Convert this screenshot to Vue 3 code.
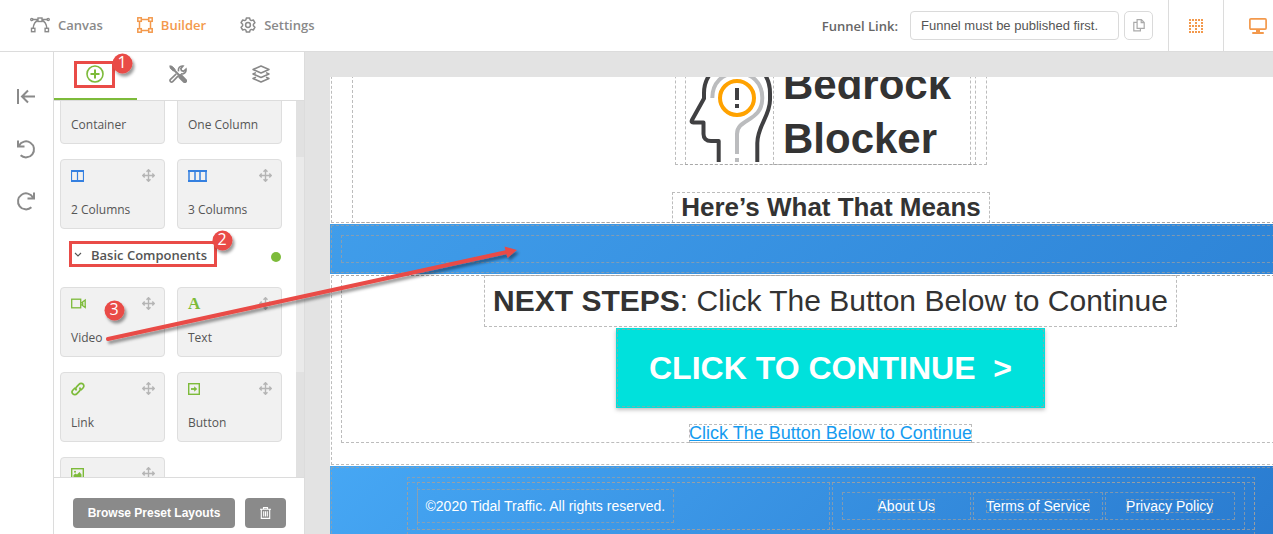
<script setup>
const nav = [
  { id: 'flow', label: 'Canvas' },
  { id: 'builder', label: 'Builder' },
  { id: 'settings', label: 'Settings' },
]
const layoutCards = [
  { id: 'container', label: 'Container' },
  { id: 'one', label: 'One Column' },
  { id: 'two', label: '2 Columns' },
  { id: 'three', label: '3 Columns' },
]
const basicCards = [
  { id: 'video', label: 'Video' },
  { id: 'text', label: 'Text' },
  { id: 'link', label: 'Link' },
  { id: 'button', label: 'Button' },
  { id: 'image', label: '' },
]
const footerLinks = ['About Us', 'Terms of Service', 'Privacy Policy']
</script>

<template>
  <div class="app">
    <header class="topbar">
      <nav class="nav">
        <a v-for="n in nav" :key="n.id" href="#" class="nav-item" :class="{ active: n.id === 'builder' }">
          <svg v-if="n.id === 'flow'" width="20" height="16" viewBox="0 0 20 16" fill="none" stroke="currentColor" stroke-width="1.4">
            <path d="M3 2.5h5M12 2.5h5M8 3.5C5 4.5 3.6 7 3.2 11M12 3.5c3 1 4.4 3.500 4.800 7.500" />
            <rect x="8" y="1" width="4" height="3.500" />
            <rect x="1.500" y="11.300" width="3.400" height="3.400" />
            <rect x="15.100" y="11.300" width="3.400" height="3.400" />
            <circle cx="1.800" cy="2.500" r="1.100" />
            <circle cx="18.200" cy="2.500" r="1.100" />
          </svg>
          <svg v-else-if="n.id === 'builder'" width="16" height="16" viewBox="0 0 16 16" fill="none" stroke="currentColor" stroke-width="1.500">
            <path d="M4.500 2.500h7M4.500 13.500h7M2.500 4.500v7M13.500 4.500v7" />
            <rect x=".8" y=".8" width="3.500" height="3.500" />
            <rect x="11.700" y=".8" width="3.500" height="3.500" />
            <rect x=".8" y="11.700" width="3.500" height="3.500" />
            <rect x="11.700" y="11.700" width="3.500" height="3.500" />
          </svg>
          <svg v-else width="16" height="16" viewBox="0 0 16 16" fill="none" stroke="currentColor" stroke-width="1.500" stroke-linejoin="round">
            <path d="M6.400.9h3.200l.5 2 1.200.7 2-.6 1.600 2.700-1.500 1.500v1.600l1.500 1.500-1.600 2.700-2-.6-1.200.7-.5 2H6.400l-.5-2-1.200-.7-2 .6-1.600-2.700 1.500-1.500V7.200L1.100 5.700 2.700 3l2 .6 1.200-.7z" />
            <circle cx="8" cy="8" r="2.400" />
          </svg>
          <span>{{ n.label }}</span>
        </a>
      </nav>
      <div class="tools">
        <label for="funnel-link" class="funnel-label">Funnel Link:</label>
        <input id="funnel-link" class="funnel-input" type="text" value="Funnel must be published first." readonly />
        <button class="copy" type="button" aria-label="Copy link">
          <svg width="12" height="13" viewBox="0 0 12 13" fill="none" stroke="#aaa" stroke-width="1.200">
            <path d="M4.100.7h4.300l2.800 2.800v5.800H4.100zM8.200.7v3h3" />
            <path d="M4 3.300H.8v8.500h6.600V9.500" />
          </svg>
        </button>
        <button class="cell" type="button" aria-label="Toggle guides">
          <svg width="14" height="14" viewBox="0 0 14 14" stroke="currentColor" stroke-width="2" fill="none">
            <path d="M0 1h14M0 7h14M0 13h14M1 0v14M7 0v14M13 0v14" stroke-dasharray="2 1" />
          </svg>
        </button>
        <button class="cell" type="button" aria-label="Desktop view">
          <svg width="18" height="16" viewBox="0 0 18 16" fill="none" stroke="currentColor" stroke-width="1.700">
            <rect x=".9" y=".9" width="16.200" height="10.200" rx="1" />
            <path d="M9 11v4" stroke-width="4" />
            <path d="M4 15h10" stroke-width="2" stroke-linecap="round" />
          </svg>
        </button>
      </div>
    </header>

    <div class="body">
      <aside class="rail">
        <button type="button" aria-label="Collapse">
          <svg width="20" height="18" viewBox="0 0 20 18" fill="none" stroke="currentColor" stroke-width="2">
            <path d="M2 1v15M19 8.500H6M12 2.500L6 8.500l6 6" />
          </svg>
        </button>
        <button type="button" aria-label="Undo">
          <svg width="20" height="20" viewBox="0 0 20 20" fill="none" stroke="currentColor" stroke-width="2">
            <path d="M3 6.500A8 8 0 1 1 4.600 16.300M2 1.500v6h6.500" />
          </svg>
        </button>
        <button type="button" aria-label="Redo">
          <svg width="20" height="20" viewBox="0 0 20 20" fill="none" stroke="currentColor" stroke-width="2">
            <path d="M17 6.500A8 8 0 1 0 15.400 16.300M18 1.500v6h-6.500" />
          </svg>
        </button>
      </aside>

      <section class="panel">
        <div class="tabs">
          <button class="tab on" type="button" aria-label="Add">
            <svg width="18" height="18" viewBox="0 0 18 18" fill="none" stroke="currentColor">
              <circle cx="9" cy="9" r="8" stroke-width="1.600" />
              <path d="M9 4.500v9M4.500 9h9" stroke-width="2" />
            </svg>
          </button>
          <button class="tab" type="button" aria-label="Tools">
            <svg width="18" height="18" viewBox="0 0 18 18" fill="none" stroke="currentColor">
              <path d="M1.500 1.500L10.500 10.500" stroke-width="2" />
              <path d="M.8.8l2.500.6 2.800 3-1.700 1.700-3-2.800z" fill="currentColor" stroke-width="1" />
              <path d="M11.500 11.500l4.300 4.300" stroke-width="4.600" stroke-linecap="round" />
              <path d="M7.300 8.800L1.500 14.400a1.500 1.500 0 0 0 2.200 2.200l5.500-5.700M9.600 6.400C8.800 3 11 .6 14 1.100l-2.200 2.500.7 2 2 .7 2.500-2.200c.5 3.200-2 5.500-5.200 4.700" stroke-width="1.600" />
            </svg>
          </button>
          <button class="tab" type="button" aria-label="Layers">
            <svg width="18" height="18" viewBox="0 0 18 18" fill="none" stroke="currentColor" stroke-width="1.500" stroke-linejoin="round">
              <path d="M9 1l8 3.500-8 3.500-8-3.500z" />
              <path d="M4 7.600L1 9l8 3.500L17 9l-3-1.400" />
              <path d="M4 12.100L1 13.500 9 17l8-3.500-3-1.400" />
            </svg>
          </button>
        </div>

        <div class="scroll">
          <div class="list">
            <div class="grid">
              <div v-for="c in layoutCards" :key="c.id" class="card">
                <div class="card-top blue">
                  <svg v-if="c.id === 'three'" width="19" height="12" viewBox="0 0 19 12" fill="none" stroke="currentColor">
                    <path d="M0 1h19M0 11h19" stroke-width="2" />
                    <path d="M1 1v10M7 1v10M12 1v10M18 1v10" stroke-width="1.500" />
                  </svg>
                  <svg v-else width="13" height="12" viewBox="0 0 13 12" fill="none" stroke="currentColor">
                    <path d="M0 1h13M0 11h13" stroke-width="2" />
                    <path d="M.5 1v10M6.500 1v10M12.500 1v10" stroke-width="1.200" />
                  </svg>
                  <svg class="move" width="13" height="13" viewBox="0 0 13 13" fill="none" stroke="currentColor" stroke-width="1.400">
                    <path d="M6.500 1v11M1 6.500h11M4.500 2.700l2-2 2 2M4.500 10.300l2 2 2-2M2.700 4.500l-2 2 2 2M10.300 4.500l2 2-2 2" />
                  </svg>
                </div>
                <span class="card-label">{{ c.label }}</span>
              </div>
            </div>

            <button class="group" type="button">
              <svg width="8" height="6" viewBox="0 0 8 6" fill="none" stroke="currentColor" stroke-width="1.100"><path d="M1 1l3 3 3-3" /></svg>
              <span class="group-name">Basic Components</span>
              <i class="dot"></i>
            </button>

            <div class="grid">
              <div v-for="c in basicCards" :key="c.id" class="card">
                <div class="card-top green">
                  <svg v-if="c.id === 'video'" width="15" height="12" viewBox="0 0 15 12" fill="none" stroke="currentColor" stroke-width="1.300">
                    <rect x=".7" y="1.200" width="9" height="8.600" />
                    <path d="M10 5l1.500-1 2.700-2v7.500l-2.700-2L10 6.500M11.700 3.500v4" />
                  </svg>
                  <span v-else-if="c.id === 'text'" class="letter">A</span>
                  <svg v-else-if="c.id === 'link'" width="14" height="14" viewBox="0 0 14 14" fill="none" stroke="currentColor" stroke-width="1.700">
                    <path d="M5.500 8.500C4.400 7.200 4.600 5.900 5.600 4.900L8 2.300C9.200 1 11 1 12.100 2.100s1 2.800-.1 3.900L9.800 8.200" />
                    <path d="M8.500 5.500c1.100 1.300.9 2.600-.1 3.600L6 11.700C4.800 13 3 13 1.900 11.900s-1-2.800.1-3.900l2.200-2.200" />
                  </svg>
                  <svg v-else-if="c.id === 'button'" width="12" height="12" viewBox="0 0 12 12" fill="none" stroke="currentColor">
                    <rect x=".7" y=".7" width="10.600" height="10.600" stroke-width="1.400" />
                    <path d="M3 6h4" stroke-width="1.800" />
                    <path d="M6.200 3.200L9.200 6l-3 2.800z" fill="currentColor" stroke="none" />
                  </svg>
                  <svg v-else width="13" height="12" viewBox="0 0 13 12" fill="none" stroke="currentColor">
                    <rect x=".7" y=".7" width="11.600" height="10.600" stroke-width="1.400" />
                    <path d="M2.500 9V7l2-1.500 1.500 1L8.500 4l2 2.500V9z" fill="currentColor" stroke="none" />
                    <circle cx="4" cy="3.700" r="1" fill="currentColor" stroke="none" />
                  </svg>
                  <svg class="move" width="13" height="13" viewBox="0 0 13 13" fill="none" stroke="currentColor" stroke-width="1.400">
                    <path d="M6.500 1v11M1 6.500h11M4.500 2.700l2-2 2 2M4.500 10.300l2 2 2-2M2.700 4.500l-2 2 2 2M10.300 4.500l2 2-2 2" />
                  </svg>
                </div>
                <span v-if="c.label" class="card-label">{{ c.label }}</span>
              </div>
            </div>
          </div>
          <div class="track"><div class="thumb"></div></div>
        </div>

        <div class="panel-foot">
          <button class="gray" type="button">Browse Preset Layouts</button>
          <button class="gray trash" type="button" aria-label="Delete">
            <svg width="11" height="12" viewBox="0 0 11 12" fill="none" stroke="currentColor" stroke-width="1.100">
              <path d="M0 2.300h11M3.500 2V.6h4V2M1.300 2.500v8.900h8.400V2.500M3.700 4.300v5.200M5.500 4.300v5.200M7.300 4.300v5.200" />
            </svg>
          </button>
        </div>
      </section>

      <main class="stage">
        <div class="page">
          <section class="block hero">
            <div class="guide hero-inner">
              <div class="guide brand">
                <div class="guide brand-row">
                  <svg width="88" height="108" viewBox="685 57 88 108" fill="none">
                    <path d="M718.700 162v-21H711c-5 0-7.500-3-7.500-7v-11.500h-10.300c-1.500 0-2-1-1.200-2.500L704 98.500V93c0-17 14-33 33-33s33 14 33 33v7c0 16-12.700 26-12.700 43v19" stroke="#404042" stroke-width="4" stroke-linejoin="round" />
                    <path d="M712.300 98c0-15 10-25 25-25s25 10 25 25c0 24-25.300 20-25.300 36v20M737 158v4" stroke="#bbbcbe" stroke-width="4" />
                    <circle cx="737" cy="98" r="17" stroke="#ffa200" stroke-width="4" fill="#fff" />
                    <path d="M737 88v12M737 104v4" stroke="#404042" stroke-width="4" />
                  </svg>
                  <h1 class="guide brand-name">Bedrock<br />Blocker</h1>
                </div>
              </div>
              <h2 class="guide subtitle">Here’s What That Means</h2>
            </div>
          </section>

          <section class="block band"><div class="guide band-inner"></div></section>

          <section class="block steps">
            <div class="guide steps-inner">
              <p class="guide next"><b>NEXT STEPS</b>: Click The Button Below to Continue</p>
              <button class="cta" type="button">CLICK TO CONTINUE&nbsp; &gt;</button>
              <a href="#" class="guide text-link">Click The Button Below to Continue</a>
            </div>
          </section>

          <footer class="block foot">
            <div class="guide foot-box">
              <div class="guide foot-row">
                <div class="guide foot-copy"><p class="guide">©2020 Tidal Traffic. All rights reserved.</p></div>
                <div class="guide foot-links">
                  <div v-for="l in footerLinks" :key="l" class="guide foot-cell"><a href="#" class="guide">{{ l }}</a></div>
                </div>
              </div>
            </div>
          </footer>
        </div>
      </main>
    </div>

    <svg class="notes" aria-hidden="true">
      <defs>
        <filter id="note-shadow" x="-20%" y="-20%" width="150%" height="150%">
          <feDropShadow dx="2" dy="3" stdDeviation="1.500" flood-color="#000" flood-opacity=".4" />
        </filter>
      </defs>
      <g fill="none" stroke="#e94b47" stroke-width="3">
        <rect x="75.500" y="62.500" width="38" height="24" />
        <rect x="70.500" y="242.500" width="145" height="23" />
      </g>
      <g filter="url(#note-shadow)" fill="#e94b47">
        <path d="M108 339L507 252" stroke="#e94b47" stroke-width="4" stroke-linecap="round" />
        <path d="M517 250L504.500 246.500L507.500 258Z" />
        <circle cx="122.500" cy="63.500" r="10" />
        <circle cx="222.500" cy="240.500" r="10" />
        <circle cx="114.500" cy="310.500" r="10" />
      </g>
      <g class="note-text">
        <text x="122" y="68">1</text>
        <text x="222" y="245">2</text>
        <text x="114" y="315">3</text>
      </g>
    </svg>
  </div>
</template>

<style>
body { margin: 0; overflow: hidden; }
</style>

<style scoped>
.app, .app * { box-sizing: border-box; }
.app {
  position: relative; display: flex; flex-direction: column; height: 100vh; overflow: hidden;
  background: #fff; color: #555; font-family: "Open Sans", "Noto Sans", sans-serif; font-size: 13px;
}
button { padding: 0; border: 0; background: none; color: inherit; font: inherit; cursor: pointer; }
svg { display: block; flex: none; }
a { color: inherit; text-decoration: none; }
h1, h2, p { margin: 0; }

.topbar { display: flex; justify-content: space-between; flex: none; height: 52px; border-bottom: 1px solid #dcdcdc; overflow: hidden; }
.nav { display: flex; align-items: center; gap: 34px; padding: 0 0 2px 30px; color: #8a8a8a; font-weight: 600; }
.nav-item { display: flex; align-items: center; gap: 8px; }
.nav-item.active { color: #f3994c; }
.tools { display: flex; align-items: center; margin-right: -6px; }
.funnel-label { margin-right: 12px; color: #666; font-weight: 600; }
.funnel-input {
  width: 209px; height: 29px; padding: 0 10px; border: 1px solid #dadada; border-radius: 4px; outline: 0;
  color: #555; background: #fff; font: 13px "Liberation Sans", Arial, sans-serif;
}
.copy { display: grid; place-items: center; width: 29px; height: 29px; margin: 0 15px 0 5px; border: 1px solid #dadada; border-radius: 5px; }
.cell { display: grid; place-items: center; width: 55px; height: 100%; border-left: 1px solid #dcdcdc; color: #f3994c; }
.cell + .cell { width: 56px; padding-left: 12px; }

.body { display: flex; flex: 1; min-height: 0; }
.rail { display: flex; flex-direction: column; align-items: center; gap: 32px; flex: none; width: 54px; padding: 35px 2px 0 0; border-right: 1px solid #dcdcdc; color: #8a8a8a; }
.rail button { display: grid; place-items: center; height: 20px; }
.panel { display: flex; flex-direction: column; flex: none; width: 251px; border-right: 1px solid #dcdcdc; }
.tabs { display: flex; flex: none; height: 49px; border-bottom: 1px solid #dcdcdc; color: #888; }
.tab { display: grid; place-items: center; flex: 1; padding: 0 2px 2px 0; border-bottom: 2px solid transparent; }
.tab.on { color: #7dbb3a; border-color: #7dbb3a; }
.scroll { display: flex; flex: 1; min-height: 0; overflow: hidden; }
.list { flex: 1; margin-top: -27px; padding: 0 14px 0 6px; }
.grid { display: grid; grid-template-columns: 1fr 1fr; gap: 15px 12px; }
.card { height: 70px; padding: 9px 9px 9px 10px; display: flex; flex-direction: column; justify-content: space-between; border: 1px solid #dedede; border-radius: 4px; background: #f1f1f1; }
.card-top { display: flex; justify-content: space-between; align-items: center; height: 13px; }
.blue { color: #3580e0; }
.green { color: #7dbb3a; }
.move { color: #b5b5b5; }
.letter { font: 700 17px "Liberation Serif", serif; }
.card-label { font-size: 12px; line-height: 18px; }
.group { display: flex; align-items: center; width: 100%; height: 58px; padding: 0 1px 6px 14px; font-size: 13px; font-weight: 600; }
.group-name { margin-left: 9px; }
.dot { width: 10px; height: 10px; margin: 3px 0 0 auto; border-radius: 50%; background: #7dbb3a; }
.track { width: 8px; padding-top: 56px; background: #e1e1e1; }
.thumb { height: 215px; background: #eaeaea; }
.panel-foot { display: flex; gap: 10px; flex: none; padding: 20px 18px 6px 19px; border-top: 1px solid #dcdcdc; }
.gray { display: grid; place-items: center; flex: 1; height: 30px; border-radius: 4px; background: #8a8a8a; color: #fff; font: 700 12px "Liberation Sans", Arial, sans-serif; }
.gray.trash { flex: none; width: 41px; }

.stage { flex: 1; min-width: 0; padding: 25px 0 0 25px; background: #e3e3e3; overflow: hidden; }
.page { height: 100%; margin-right: -58px; overflow: hidden; background: #fff; color: #333; font-family: "Liberation Sans", Arial, sans-serif; }
.guide { outline: 1px dashed rgba(160, 160, 160, .7); outline-offset: -1px; }
.block { outline: 1px dashed rgba(160, 160, 160, .7); outline-offset: -2px; }
.hero { margin-top: -22px; padding: 0 21px 1px 22px; }
.hero-inner { display: flex; flex-direction: column; align-items: center; gap: 27px; }
.brand { padding: 0 11px 0 10px; }
.brand-row { display: flex; align-items: flex-end; padding-right: 5px; }
.brand-name { width: 198px; height: 110px; padding: 3px 0 0 10px; font-size: 42px; line-height: 54px; }
.subtitle { padding: 1px 9px; font-size: 26px; line-height: 29px; }
.band { padding: 11px; background: linear-gradient(135deg, #409dea, #2d83d6); }
.band-inner { height: 28px; }
.steps { padding: 1px 11px 23px; }
.steps-inner { display: flex; flex-direction: column; align-items: center; }
.next { padding: 1px 9px; font-size: 30px; line-height: 50px; white-space: nowrap; }
.cta {
  height: 80px; margin: 1px 0 16px; padding: 0 33px; background: #00e1dc; color: #fff; font-size: 32px; font-weight: 700;
  outline: 1px dashed rgba(160, 160, 160, .7); outline-offset: -2px; box-shadow: 0 2px 4px rgba(0, 0, 0, .25);
}
.text-link { color: #149bf0; font-size: 18px; line-height: 19px; text-decoration: underline; }
.foot { padding: 11px 11px 24px; background: linear-gradient(135deg, #46a7f4, #2777cc); color: #fff; font-size: 14px; }
.foot-box { max-width: 848px; margin: 0 auto; padding: 5px 0 20px; }
.foot-row { display: flex; gap: 2px; padding: 0 10px; }
.foot-copy { flex: 1; padding: 7px 0; }
.foot-copy p { width: fit-content; padding: 9px; line-height: 16px; }
.foot-links { display: flex; align-items: center; gap: 2px; width: 413px; padding: 0 10px; }
.foot-cell { flex: 1; padding: 7px 0; text-align: center; line-height: 14px; }
.foot-cell a { display: inline-block; }

.notes { position: absolute; inset: 0; width: 100%; height: 100%; pointer-events: none; }
.note-text { fill: #fff; font-size: 16px; text-anchor: middle; }
</style>
